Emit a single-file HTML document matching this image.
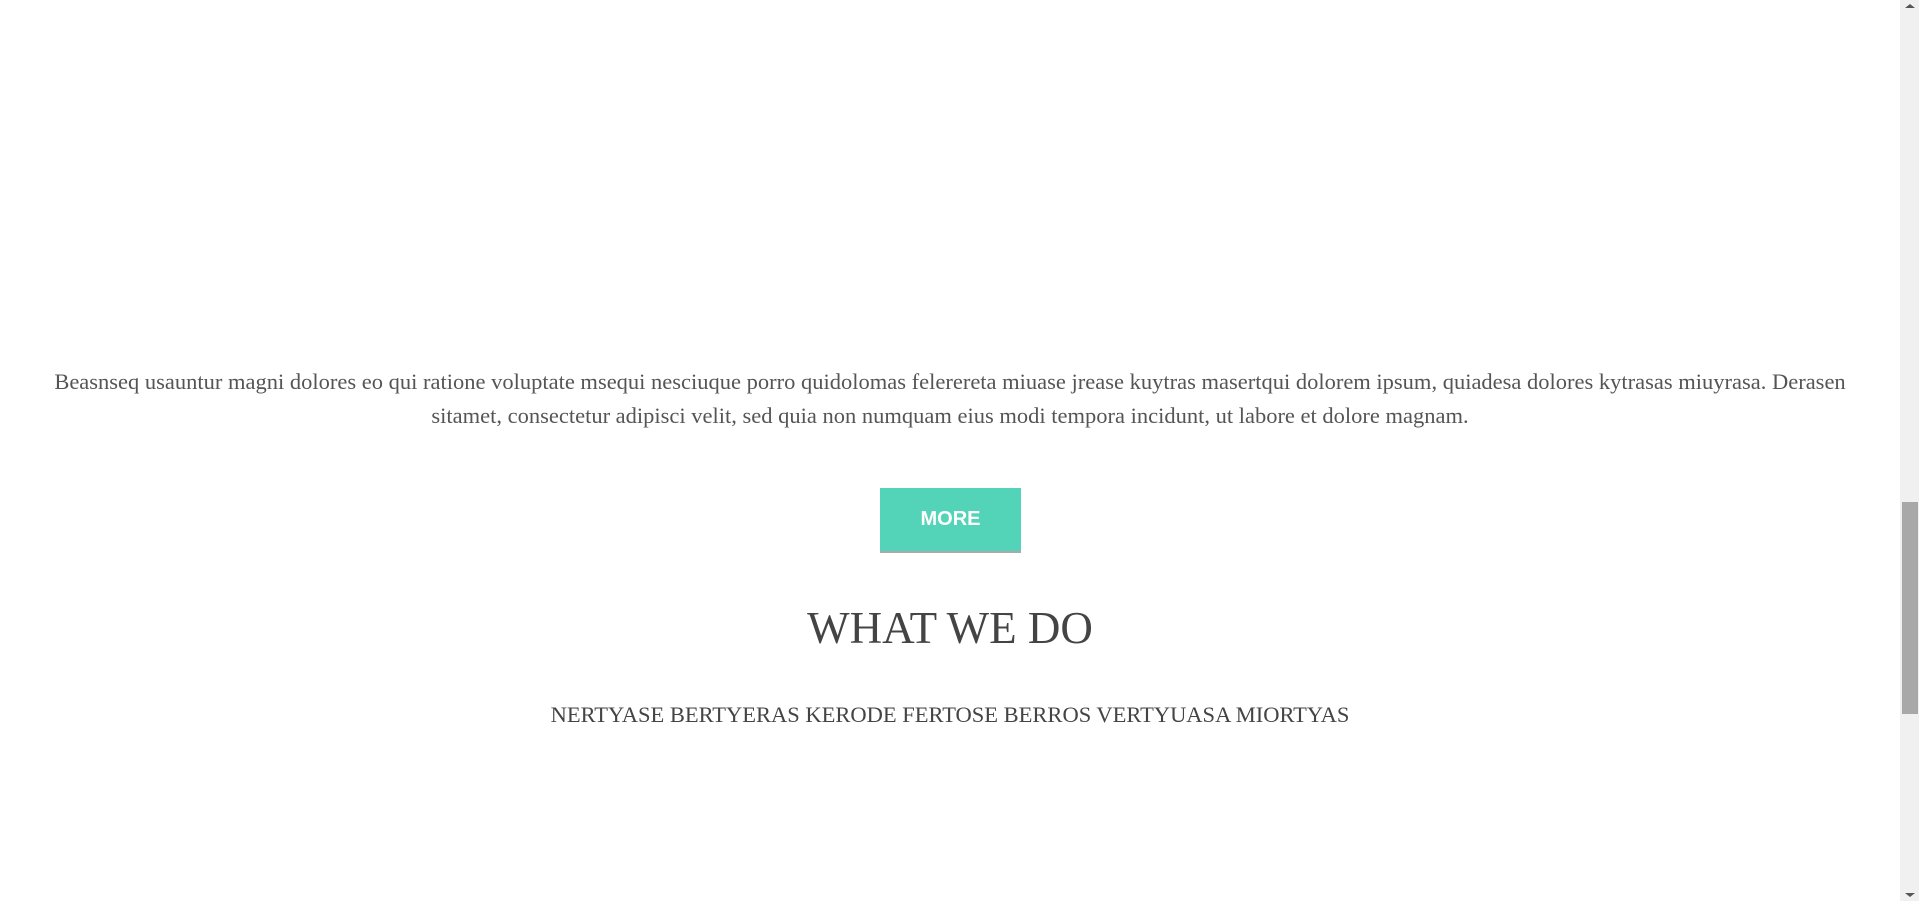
<!DOCTYPE html>
<html><head><style>
html,body{margin:0;padding:0;background:#fff;width:1919px;height:901px;overflow:hidden;position:relative}
.p{position:absolute;left:40px;width:1820px;top:365px;text-align:center;font-family:"Liberation Serif",serif;font-size:22.5px;line-height:34px;color:#555}
.btn{position:absolute;left:880px;top:488px;width:141px;height:63px;background:#53d3b7;border-bottom:2px solid #aaa;box-sizing:content-box;color:#fff;font-family:"Liberation Sans",sans-serif;font-weight:bold;font-size:20px;line-height:63px;text-align:center}
h2{position:absolute;left:0;width:1900px;top:598px;margin:0;text-align:center;font-family:"Liberation Serif",serif;font-weight:normal;font-size:45px;line-height:60px;color:#444}
.sub{position:absolute;left:0;width:1900px;top:702px;text-align:center;font-family:"Liberation Serif",serif;font-size:22.5px;line-height:26px;color:#444}
.sb{position:absolute;left:1900px;top:0;width:19px;height:901px;background:#f0f0f0}
.th{position:absolute;left:1902px;top:502px;width:16px;height:212px;background:#a8a8a8}
.au{position:absolute;left:1905px;top:4px;width:0;height:0;border-left:5px solid transparent;border-right:5px solid transparent;border-bottom:4px solid #555}
.ad{position:absolute;left:1905px;top:893px;width:0;height:0;border-left:5px solid transparent;border-right:5px solid transparent;border-top:4px solid #555}
</style></head><body>
<div class="p">Beasnseq usauntur magni dolores eo qui ratione voluptate msequi nesciuque porro quidolomas felerereta miuase jrease kuytras masertqui dolorem ipsum, quiadesa dolores kytrasas miuyrasa. Derasen sitamet, consectetur adipisci velit, sed quia non numquam eius modi tempora incidunt, ut labore et dolore magnam.</div>
<div class="btn">MORE</div>
<h2>WHAT WE DO</h2>
<div class="sub">NERTYASE BERTYERAS KERODE FERTOSE BERROS VERTYUASA MIORTYAS</div>
<div class="sb"></div><div class="th"></div><div class="au"></div><div class="ad"></div>
</body></html>
